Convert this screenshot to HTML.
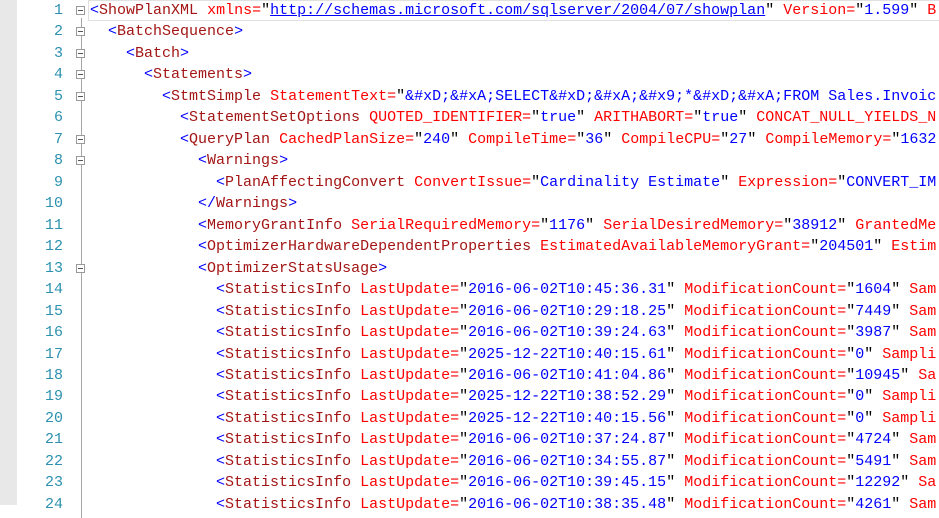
<!DOCTYPE html>
<html><head><meta charset="utf-8"><style>
body{margin:0;width:939px;height:505px;overflow:hidden;background:#fff;position:relative;font-family:"Liberation Mono",monospace;font-size:15px}
#bar{position:absolute;left:0;top:0;width:17px;height:505px;background:#e8e8e8}
#code{position:absolute;left:0;top:0px;width:939px}
.l{height:21.48px;line-height:21.48px;position:relative;white-space:pre}
.n{position:absolute;right:876px;color:#2b91af;text-align:right}
.t{position:absolute;left:90px;color:#000}
.b{color:#0000ff}.e{color:#a31515}.a,.q{color:#ff0000}.v{color:#0000ff}.u{color:#0000ff;text-decoration:underline}
.fb{position:absolute;left:76px;top:6px;width:9px;height:9px;border:1px solid #999;background:#fff;box-sizing:border-box}
.fb:after{content:"";position:absolute;left:1px;top:3px;width:5px;height:1px;background:#555}
#vl{position:absolute;left:81px;top:18px;width:1px;height:500px;background:#a5a5a5}
#cur{position:absolute;left:88px;top:0;width:860px;height:21px;border:1px solid #e0e0e0;box-sizing:border-box}
</style></head><body>
<div id="bar"></div>
<div id="vl"></div>
<div id="cur"></div>
<div id="code">
<div class="l"><span class="n">1</span><span class="fb"></span><span class="t"><span class="b">&lt;</span><span class="e">ShowPlanXML</span> <span class="a">xmlns</span><span class="q">=</span>"<span class="u">http://schemas.microsoft.com/sqlserver/2004/07/showplan</span>" <span class="a">Version</span><span class="q">=</span>"<span class="v">1.599</span>" <span class="a">B</span></span></div>
<div class="l"><span class="n">2</span><span class="fb"></span><span class="t">  <span class="b">&lt;</span><span class="e">BatchSequence</span><span class="b">&gt;</span></span></div>
<div class="l"><span class="n">3</span><span class="fb"></span><span class="t">    <span class="b">&lt;</span><span class="e">Batch</span><span class="b">&gt;</span></span></div>
<div class="l"><span class="n">4</span><span class="fb"></span><span class="t">      <span class="b">&lt;</span><span class="e">Statements</span><span class="b">&gt;</span></span></div>
<div class="l"><span class="n">5</span><span class="fb"></span><span class="t">        <span class="b">&lt;</span><span class="e">StmtSimple</span> <span class="a">StatementText</span><span class="q">=</span>"<span class="v">&amp;#xD;&amp;#xA;SELECT&amp;#xD;&amp;#xA;&amp;#x9;*&amp;#xD;&amp;#xA;FROM Sales.Invoic</span></span></div>
<div class="l"><span class="n">6</span><span class="t">          <span class="b">&lt;</span><span class="e">StatementSetOptions</span> <span class="a">QUOTED_IDENTIFIER</span><span class="q">=</span>"<span class="v">true</span>" <span class="a">ARITHABORT</span><span class="q">=</span>"<span class="v">true</span>" <span class="a">CONCAT_NULL_YIELDS_N</span></span></div>
<div class="l"><span class="n">7</span><span class="fb"></span><span class="t">          <span class="b">&lt;</span><span class="e">QueryPlan</span> <span class="a">CachedPlanSize</span><span class="q">=</span>"<span class="v">240</span>" <span class="a">CompileTime</span><span class="q">=</span>"<span class="v">36</span>" <span class="a">CompileCPU</span><span class="q">=</span>"<span class="v">27</span>" <span class="a">CompileMemory</span><span class="q">=</span>"<span class="v">1632</span></span></div>
<div class="l"><span class="n">8</span><span class="fb"></span><span class="t">            <span class="b">&lt;</span><span class="e">Warnings</span><span class="b">&gt;</span></span></div>
<div class="l"><span class="n">9</span><span class="t">              <span class="b">&lt;</span><span class="e">PlanAffectingConvert</span> <span class="a">ConvertIssue</span><span class="q">=</span>"<span class="v">Cardinality Estimate</span>" <span class="a">Expression</span><span class="q">=</span>"<span class="v">CONVERT_IM</span></span></div>
<div class="l"><span class="n">10</span><span class="t">            <span class="b">&lt;/</span><span class="e">Warnings</span><span class="b">&gt;</span></span></div>
<div class="l"><span class="n">11</span><span class="t">            <span class="b">&lt;</span><span class="e">MemoryGrantInfo</span> <span class="a">SerialRequiredMemory</span><span class="q">=</span>"<span class="v">1176</span>" <span class="a">SerialDesiredMemory</span><span class="q">=</span>"<span class="v">38912</span>" <span class="a">GrantedMe</span></span></div>
<div class="l"><span class="n">12</span><span class="t">            <span class="b">&lt;</span><span class="e">OptimizerHardwareDependentProperties</span> <span class="a">EstimatedAvailableMemoryGrant</span><span class="q">=</span>"<span class="v">204501</span>" <span class="a">Estim</span></span></div>
<div class="l"><span class="n">13</span><span class="fb"></span><span class="t">            <span class="b">&lt;</span><span class="e">OptimizerStatsUsage</span><span class="b">&gt;</span></span></div>
<div class="l"><span class="n">14</span><span class="t">              <span class="b">&lt;</span><span class="e">StatisticsInfo</span> <span class="a">LastUpdate</span><span class="q">=</span>"<span class="v">2016-06-02T10:45:36.31</span>" <span class="a">ModificationCount</span><span class="q">=</span>"<span class="v">1604</span>" <span class="a">Sam</span></span></div>
<div class="l"><span class="n">15</span><span class="t">              <span class="b">&lt;</span><span class="e">StatisticsInfo</span> <span class="a">LastUpdate</span><span class="q">=</span>"<span class="v">2016-06-02T10:29:18.25</span>" <span class="a">ModificationCount</span><span class="q">=</span>"<span class="v">7449</span>" <span class="a">Sam</span></span></div>
<div class="l"><span class="n">16</span><span class="t">              <span class="b">&lt;</span><span class="e">StatisticsInfo</span> <span class="a">LastUpdate</span><span class="q">=</span>"<span class="v">2016-06-02T10:39:24.63</span>" <span class="a">ModificationCount</span><span class="q">=</span>"<span class="v">3987</span>" <span class="a">Sam</span></span></div>
<div class="l"><span class="n">17</span><span class="t">              <span class="b">&lt;</span><span class="e">StatisticsInfo</span> <span class="a">LastUpdate</span><span class="q">=</span>"<span class="v">2025-12-22T10:40:15.61</span>" <span class="a">ModificationCount</span><span class="q">=</span>"<span class="v">0</span>" <span class="a">Sampli</span></span></div>
<div class="l"><span class="n">18</span><span class="t">              <span class="b">&lt;</span><span class="e">StatisticsInfo</span> <span class="a">LastUpdate</span><span class="q">=</span>"<span class="v">2016-06-02T10:41:04.86</span>" <span class="a">ModificationCount</span><span class="q">=</span>"<span class="v">10945</span>" <span class="a">Sa</span></span></div>
<div class="l"><span class="n">19</span><span class="t">              <span class="b">&lt;</span><span class="e">StatisticsInfo</span> <span class="a">LastUpdate</span><span class="q">=</span>"<span class="v">2025-12-22T10:38:52.29</span>" <span class="a">ModificationCount</span><span class="q">=</span>"<span class="v">0</span>" <span class="a">Sampli</span></span></div>
<div class="l"><span class="n">20</span><span class="t">              <span class="b">&lt;</span><span class="e">StatisticsInfo</span> <span class="a">LastUpdate</span><span class="q">=</span>"<span class="v">2025-12-22T10:40:15.56</span>" <span class="a">ModificationCount</span><span class="q">=</span>"<span class="v">0</span>" <span class="a">Sampli</span></span></div>
<div class="l"><span class="n">21</span><span class="t">              <span class="b">&lt;</span><span class="e">StatisticsInfo</span> <span class="a">LastUpdate</span><span class="q">=</span>"<span class="v">2016-06-02T10:37:24.87</span>" <span class="a">ModificationCount</span><span class="q">=</span>"<span class="v">4724</span>" <span class="a">Sam</span></span></div>
<div class="l"><span class="n">22</span><span class="t">              <span class="b">&lt;</span><span class="e">StatisticsInfo</span> <span class="a">LastUpdate</span><span class="q">=</span>"<span class="v">2016-06-02T10:34:55.87</span>" <span class="a">ModificationCount</span><span class="q">=</span>"<span class="v">5491</span>" <span class="a">Sam</span></span></div>
<div class="l"><span class="n">23</span><span class="t">              <span class="b">&lt;</span><span class="e">StatisticsInfo</span> <span class="a">LastUpdate</span><span class="q">=</span>"<span class="v">2016-06-02T10:39:45.15</span>" <span class="a">ModificationCount</span><span class="q">=</span>"<span class="v">12292</span>" <span class="a">Sa</span></span></div>
<div class="l"><span class="n">24</span><span class="t">              <span class="b">&lt;</span><span class="e">StatisticsInfo</span> <span class="a">LastUpdate</span><span class="q">=</span>"<span class="v">2016-06-02T10:38:35.48</span>" <span class="a">ModificationCount</span><span class="q">=</span>"<span class="v">4261</span>" <span class="a">Sam</span></span></div>
</div>
</body></html>
